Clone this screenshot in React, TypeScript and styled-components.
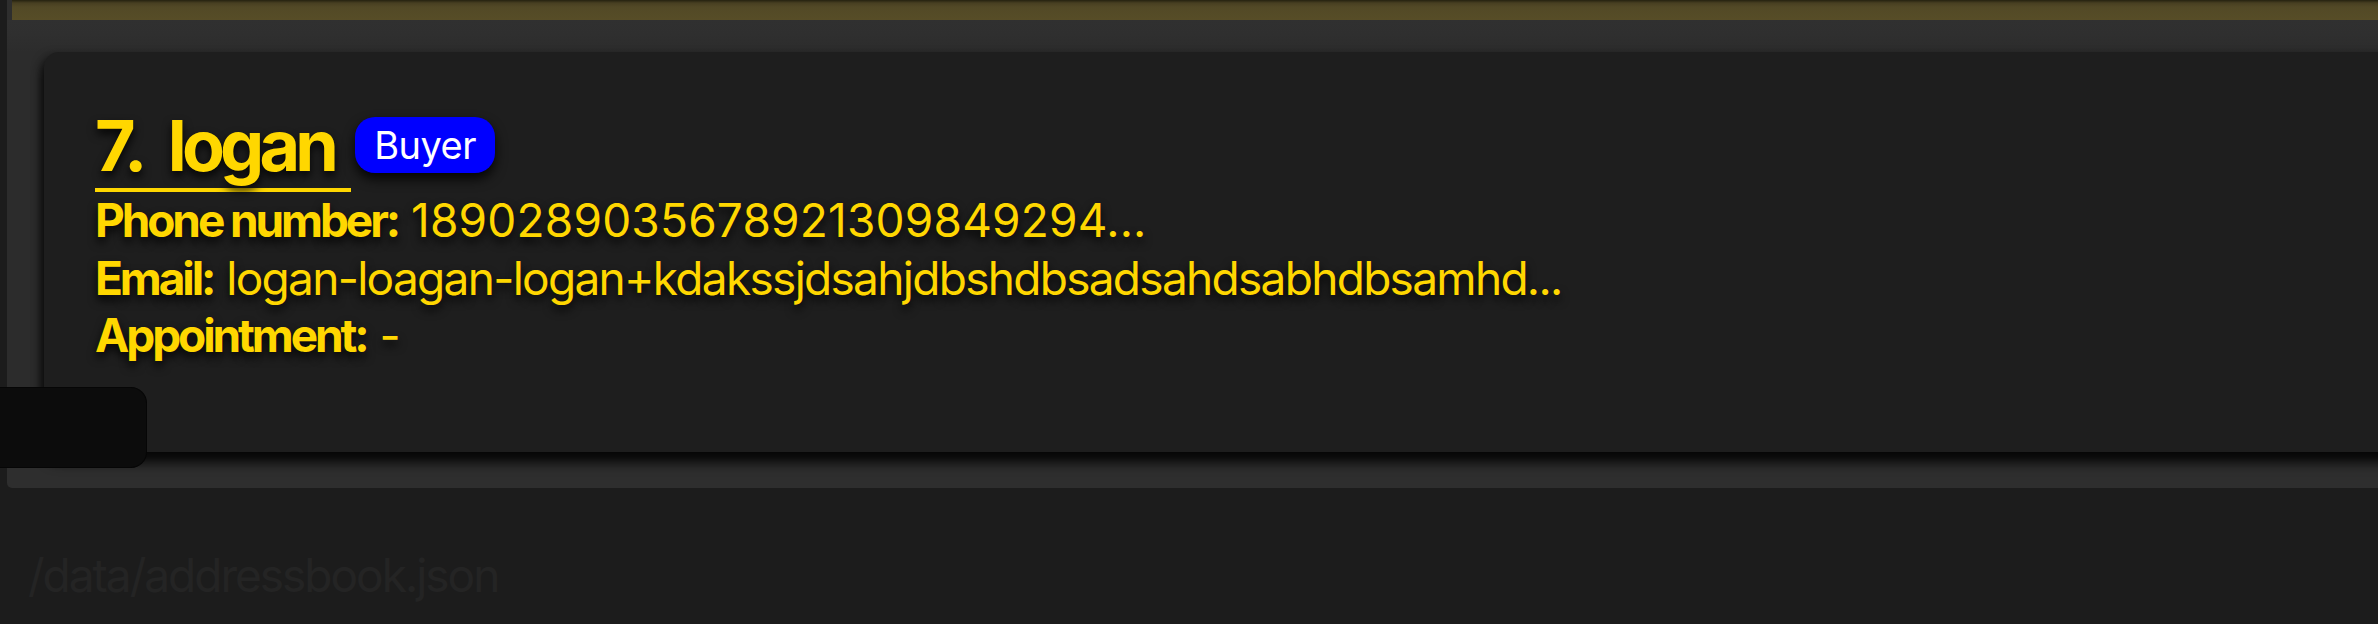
import React from "react";
import styled, { createGlobalStyle } from "styled-components";

const Global = createGlobalStyle`
  html, body {
    margin: 0;
    padding: 0;
    background: #1c1c1c;
    overflow: hidden;
  }
  body {
    font-family: Inter, "Noto Sans", sans-serif;
    width: 2378px;
    height: 624px;
  }
`;

const Page = styled.div`
  position: relative;
  width: 2378px;
  height: 624px;
  background: #1c1c1c;
  display: flex;
  flex-direction: column;
  overflow: hidden;
`;

const ListPanel = styled.div`
  margin-left: 7px;
  margin-right: -60px;
  height: 488px;
  background: #2e2e2e;
  border-bottom-left-radius: 5px;
  display: flex;
  flex-direction: column;
  overflow: hidden;
`;

const PrevCell = styled.div`
  margin-left: 5px;
  height: 20px;
  flex: none;
  background: linear-gradient(to bottom, #24210f 0px, #473f21 3px, #524926 7px, #574d27 20px);
`;

const Cell = styled.div`
  padding-top: 32px;
  padding-left: 37px;
  display: flex;
  background: linear-gradient(to bottom, #303030 0px, #2f2f2f 14px, #2c2c2c 32px);
`;

const Card = styled.div`
  flex: 1;
  background: #1e1e1e;
  border-radius: 15px;
  padding: 51px 0 87px 51px;
  box-shadow: 0 11px 12px rgba(0, 0, 0, 0.75), -3px 4px 10px rgba(0, 0, 0, 0.55);
  color: #ffd700;
`;

const TitleRow = styled.div`
  display: flex;
  align-items: flex-start;
  gap: 4px;
`;

const Title = styled.div`
  font-size: 70px;
  font-weight: 700;
  line-height: 85px;
  letter-spacing: -3px;
  word-spacing: 12px;
  padding-right: 17px;
  border-bottom: 4px solid #ffd700;
  text-shadow: 0 5px 10px rgba(0, 0, 0, 0.9);
  white-space: pre;
`;

const Name = styled.span`
  letter-spacing: -4.8px;
`;

const Badge = styled.span`
  margin-top: 14px;
  height: 56px;
  padding: 0 19px;
  box-sizing: border-box;
  display: inline-flex;
  align-items: center;
  background: #0000ff;
  color: #ffffff;
  border-radius: 20px;
  font-size: 38px;
  letter-spacing: -0.5px;
  box-shadow: 0 6px 12px rgba(0, 0, 0, 0.85);
`;

const Field = styled.div`
  font-size: 46px;
  line-height: 57.5px;
  white-space: nowrap;
  text-shadow: 0 5px 10px rgba(0, 0, 0, 0.9);
`;

const Label = styled.span`
  font-weight: 700;
  letter-spacing: -3.1px;
`;

const Value = styled.span<{ $tracking: number }>`
  font-weight: 400;
  letter-spacing: ${(p) => p.$tracking}px;
`;

const ScrollThumb = styled.div`
  position: absolute;
  left: 0;
  top: 387px;
  width: 147px;
  height: 81px;
  box-sizing: border-box;
  background: #0c0c0c;
  border: 1px solid #060606;
  border-left: none;
  border-radius: 0 16px 16px 0;
`;

const StatusBar = styled.div`
  margin-top: 59px;
  padding-left: 28px;
  font-size: 46px;
  line-height: 57.5px;
  color: #242424;
  letter-spacing: -2px;
`;

export default function App() {
  return (
    <Page>
      <Global />
      <ListPanel>
        <PrevCell />
        <Cell>
          <Card>
            <TitleRow>
              <Title>
                7. <Name>logan</Name>
              </Title>
              <Badge>Buyer</Badge>
            </TitleRow>
            <Field>
              <Label>Phone number:</Label>{" "}
              <Value $tracking={0.2}>1890289035678921309849294...</Value>
            </Field>
            <Field>
              <Label>Email:</Label>{" "}
              <Value $tracking={-1.7}>logan-loagan-logan+kdakssjdsahjdbshdbsadsahdsabhdbsamhd...</Value>
            </Field>
            <Field>
              <Label>Appointment:</Label> <Value $tracking={0}>-</Value>
            </Field>
          </Card>
        </Cell>
      </ListPanel>
      <ScrollThumb />
      <StatusBar>/data/addressbook.json</StatusBar>
    </Page>
  );
}
